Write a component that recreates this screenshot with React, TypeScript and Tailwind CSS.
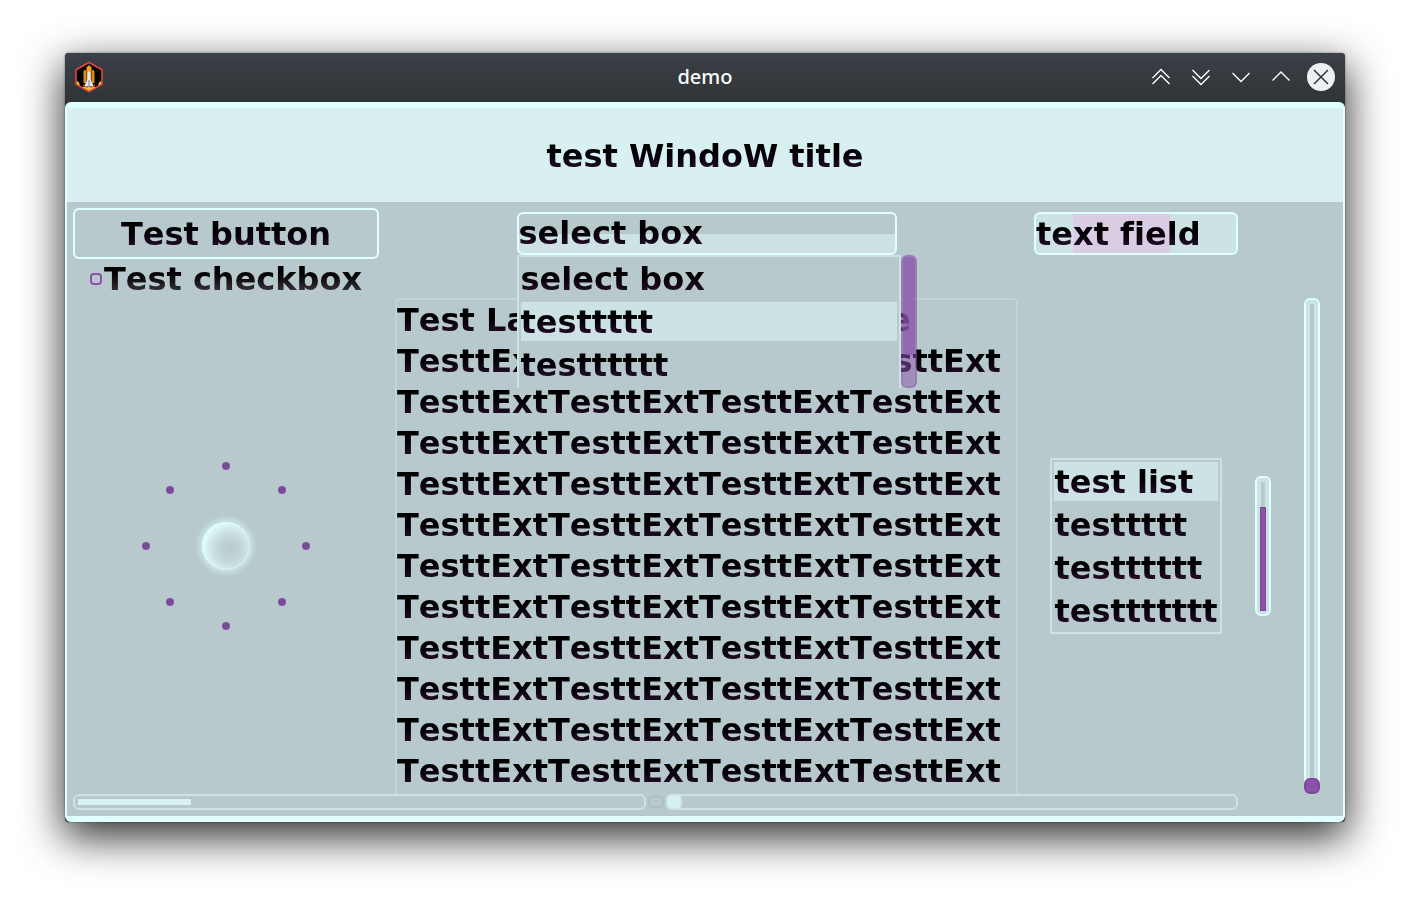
import React, { useState } from "react";

const inkText =
  "bg-linear-to-b from-black from-20% to-[#210f26] to-80% bg-clip-text text-transparent";

const repeatedLine = "TesttExtTesttExtTesttExtTesttExt";
const labelLines = ["Test Label with multiple line", ...Array(11).fill(repeatedLine)];
const selectOptions = ["select box", "testtttt", "testttttt"];
const listItems = ["test list", "testtttt", "testttttt", "testtttttt"];

function AppIcon() {
  return (
    <svg width="28" height="34" viewBox="1 0 28 34" aria-hidden="true">
      <path d="M15 2.500 28 9.800V24.200L15 31.500 2 24.200V9.800Z" fill="#050505" stroke="#e8443f" strokeWidth="1.600" />
      <path d="M12.500 7.500 15 5 17.500 7.500V21H12.500Z" fill="#f2a222" />
      <path d="M9.500 11.500 10.500 10h1.500v13h-2.500zM18 10h1.500l1 1.500V23H18z" fill="#d98c1c" />
      <path d="M13.500 13 15 11 16.500 13V19L19 24.500V26.500H11V24.500L13.500 19Z" fill="#e4e7ee" />
      <path d="M14.500 20h1v6h-1z" fill="#7c7f88" />
      <path d="M9 24.500h2v2H9zM19 24.500h2v2h-2z" fill="#d33a33" />
      <path d="M2.800 21 5 22.500 6 25.500 2.800 24ZM27.200 21 25 22.500 24 25.500 27.200 24ZM8.500 27.200 11 26.500 13 27.500 15 26.500 17 27.500 19 26.500 21.500 27.200 15 30.700Z" fill="#f7c22f" />
    </svg>
  );
}

function TitleButton({ label, path }: { label: string; path: string }) {
  return (
    <button type="button" aria-label={label} className="flex size-7 items-center justify-center">
      <svg width="22" height="22" viewBox="0 0 22 22" fill="none" stroke="#fcfcfc" strokeWidth="1.400" aria-hidden="true">
        <path d={path} />
      </svg>
    </button>
  );
}

function TitleBar() {
  return (
    <header className="grid h-[49px] grid-cols-[1fr_auto_1fr] items-center rounded-t bg-linear-to-b from-[#3c4047] to-[#2f3437] px-[10px] pb-[2px]">
      <AppIcon />
      <span className="font-['Noto_Sans',sans-serif] text-xl font-medium text-[#fcfcfc]">demo</span>
      <div className="flex justify-end gap-3">
        <TitleButton label="Keep above" path="M2.500 12 11 3.500 19.500 12M2.500 18 11 9.500 19.500 18" />
        <TitleButton label="Keep below" path="M2.500 4 11 12.500 19.500 4M2.500 10 11 18.500 19.500 10" />
        <TitleButton label="Minimize" path="M2.500 7 11 15.500 19.500 7" />
        <TitleButton label="Maximize" path="M2.500 14.500 11 6 19.500 14.500" />
        <button type="button" aria-label="Close" className="flex size-7 items-center justify-center rounded-full bg-[#eff0f1]">
          <svg width="16" height="16" viewBox="0 0 16 16" stroke="#31363b" strokeWidth="1.500" aria-hidden="true">
            <path d="M1 1 15 15M15 1 1 15" />
          </svg>
        </button>
      </div>
    </header>
  );
}

function ItemList({ items, active }: { items: string[]; active: number }) {
  return (
    <ul className="flex flex-col gap-1">
      {items.map((item, i) => (
        <li key={item} className={i === active ? "bg-[#cde2e5]" : ""}>
          <span className={`block h-[39px] leading-[41px] whitespace-nowrap ${inkText}`}>{item}</span>
        </li>
      ))}
    </ul>
  );
}

function SelectBox() {
  const [value, setValue] = useState(selectOptions[0]);
  return (
    <div className="relative w-[380px] max-w-full">
      <div className="rounded-md border-2 border-[#e0ffff] bg-linear-to-b from-[#b7c9cc] from-50% to-[#cde2e5] to-50%">
        <select
          aria-label="select box"
          value={value}
          onChange={(e) => setValue(e.target.value)}
          className={`block h-[39px] w-full appearance-none leading-[39px] outline-none ${inkText}`}
        >
          {selectOptions.map((o) => (
            <option key={o}>{o}</option>
          ))}
        </select>
      </div>
      <div className="absolute top-full left-0 z-10 flex h-[133px]">
        <div className="w-[384px] overflow-hidden border-2 border-b-0 border-[#cde2e5] bg-[#b7c9cc] p-[2px]">
          <ItemList items={selectOptions} active={1} />
        </div>
        <div className="w-4 overflow-hidden rounded-md border-2 border-[#7a4a9a]/20 bg-[#8a52ab]/50">
          <div className="h-[98px] rounded-b-sm bg-[#8a52ab]/60" />
        </div>
      </div>
    </div>
  );
}

function TextField() {
  const [value, setValue] = useState("text field");
  return (
    <div className="relative w-full rounded-md border-2 border-[#e0ffff] bg-[#cde2e5]">
      <span className="absolute inset-y-0 left-[37px] w-[97px] bg-[#d9cce3]" />
      <input
        type="text"
        aria-label="text field"
        value={value}
        onChange={(e) => setValue(e.target.value)}
        className={`relative block h-[39px] w-full outline-none ${inkText}`}
      />
    </div>
  );
}

const dialDots = [
  [0, -80],
  [56, -56],
  [80, 0],
  [56, 56],
  [0, 80],
  [-56, 56],
  [-80, 0],
  [-56, -56],
];

function Dial() {
  return (
    <svg width="180" height="180" viewBox="-90 -90 180 180" role="img" aria-label="Dial">
      <defs>
        <radialGradient id="glow">
          <stop offset="0.700" stopColor="#e0ffff" stopOpacity="0.600" />
          <stop offset="1" stopColor="#e0ffff" stopOpacity="0" />
        </radialGradient>
        <radialGradient id="orb" cx="0.580" cy="0.560" r="0.600">
          <stop offset="0" stopColor="#b8cacd" />
          <stop offset="0.300" stopColor="#bfd2d5" />
          <stop offset="0.600" stopColor="#cce1e4" />
          <stop offset="0.850" stopColor="#dbf6f7" />
          <stop offset="1" stopColor="#e0ffff" />
        </radialGradient>
        <radialGradient id="dot">
          <stop offset="0" stopColor="#6f4890" />
          <stop offset="1" stopColor="#824ea5" />
        </radialGradient>
      </defs>
      <circle r="31" fill="url(#glow)" />
      <circle r="24" fill="url(#orb)" />
      <circle r="23.500" fill="none" stroke="#e0ffff" strokeOpacity="0.400" />
      {dialDots.map(([x, y]) => (
        <circle key={`${x},${y}`} cx={x} cy={y} r="4" fill="url(#dot)" />
      ))}
    </svg>
  );
}

export default function App() {
  const [checked, setChecked] = useState(false);
  const [level, setLevel] = useState(0);
  const [position, setPosition] = useState(0);

  return (
    <div className="min-h-screen bg-white px-[65px] pt-[53px] pb-[77px] font-['DejaVu_Sans',sans-serif] text-[32px] font-bold [font-kerning:none] [font-variant-ligatures:none]">
      <div className="rounded bg-[#2f3437] shadow-[0_14px_42px_2px_rgba(0,0,0,0.8),0_0_2px_rgba(0,0,0,0.5)]">
        <TitleBar />
        <main className="rounded-md border-x-2 border-y-[6px] border-[#e0ffff] bg-[#b7c9cc]">
          <h1 className="flex h-[94px] items-center justify-center bg-[#d8f0f2]">
            <span className={`pt-[2px] leading-[41px] ${inkText}`}>test WindoW title</span>
          </h1>

          <div className="grid grid-cols-[306px_1fr_204px_18px_49px] gap-x-4 p-[6px]">
            <button type="button" className="h-[51px] rounded-md border-2 border-[#e0ffff]">
              <span className={`block pt-[2px] leading-[41px] ${inkText}`}>Test button</span>
            </button>
            <div className="flex items-center justify-center">
              <SelectBox />
            </div>
            <div className="flex items-center">
              <TextField />
            </div>

            <label className="col-start-1 flex h-[39px] items-center justify-center gap-[2px]">
              <input
                type="checkbox"
                checked={checked}
                onChange={(e) => setChecked(e.target.checked)}
                className="size-3 appearance-none rounded border-2 border-[#8a52ab] checked:bg-[#8a52ab]"
              />
              <span className="bg-linear-to-b from-black from-20% to-[#39333b] to-80% bg-clip-text pt-[2px] leading-[41px] whitespace-nowrap text-transparent">
                Test checkbox
              </span>
            </label>

            <div className="col-start-1 flex items-center justify-center">
              <Dial />
            </div>
            <div className="h-[496px] overflow-hidden rounded-t border-2 border-b-0 border-[#c1d5d8]">
              {labelLines.map((line, i) => (
                <p key={i} className={`h-[41px] leading-[41px] whitespace-nowrap ${inkText}`}>
                  {line}
                </p>
              ))}
            </div>
            <div className="flex items-center justify-center">
              <div className="border-2 border-[#cde2e5] p-[2px]">
                <ItemList items={listItems} active={0} />
              </div>
            </div>
            <div className="flex items-center justify-center">
              <div
                role="progressbar"
                aria-label="Level"
                aria-valuenow={80}
                className="flex h-[140px] w-4 flex-col items-center rounded-md border-2 border-[#e0ffff] bg-[#cde2e5] pt-1 pb-[3px]"
              >
                <div className="w-1 grow bg-[#b7c9cc]" />
                <div className="h-[104px] w-[6px] border border-[#7a4a9a] bg-[#8a52ab]" />
              </div>
            </div>
            <div className="flex pl-4">
              <div className="relative flex w-4 justify-center rounded-md border-2 border-[#e0ffff] bg-[#cde2e5] py-1">
                <div className="w-1 bg-[#b7c9cc]" />
                <input
                  type="range"
                  aria-label="Vertical slider"
                  value={level}
                  onChange={(e) => setLevel(Number(e.target.value))}
                  className="absolute -inset-[2px] m-0 h-[496px] w-4 appearance-none bg-transparent [direction:rtl] [writing-mode:vertical-lr] [&::-webkit-slider-thumb]:size-4 [&::-webkit-slider-thumb]:appearance-none [&::-webkit-slider-thumb]:rounded-md [&::-webkit-slider-thumb]:border-2 [&::-webkit-slider-thumb]:border-[#7c4a9b] [&::-webkit-slider-thumb]:bg-[#8a52ab]"
                />
              </div>
            </div>

            <div className="col-span-3 col-start-1 grid h-4 grid-cols-[1fr_16px_1fr] items-center gap-[2px]">
              <div
                role="progressbar"
                aria-label="Progress"
                aria-valuenow={20}
                className="h-4 rounded-md border-2 border-[#cde2e5] p-[3px]"
              >
                <div className="h-[6px] w-1/5 bg-[#d8f0f2]" />
              </div>
              <input
                type="checkbox"
                aria-label="Toggle"
                className="h-3 w-4 appearance-none rounded border-2 border-[#adbec1]"
              />
              <div className="relative h-4 rounded-md border-2 border-[#cde2e5]">
                <input
                  type="range"
                  aria-label="Horizontal slider"
                  value={position}
                  onChange={(e) => setPosition(Number(e.target.value))}
                  className="absolute -inset-x-[2px] -top-[2px] m-0 h-4 appearance-none bg-transparent [&::-webkit-slider-thumb]:size-4 [&::-webkit-slider-thumb]:appearance-none [&::-webkit-slider-thumb]:rounded-md [&::-webkit-slider-thumb]:border-2 [&::-webkit-slider-thumb]:border-[#cde6e9] [&::-webkit-slider-thumb]:bg-[#d8f0f2]"
                />
              </div>
            </div>
          </div>
        </main>
      </div>
    </div>
  );
}
